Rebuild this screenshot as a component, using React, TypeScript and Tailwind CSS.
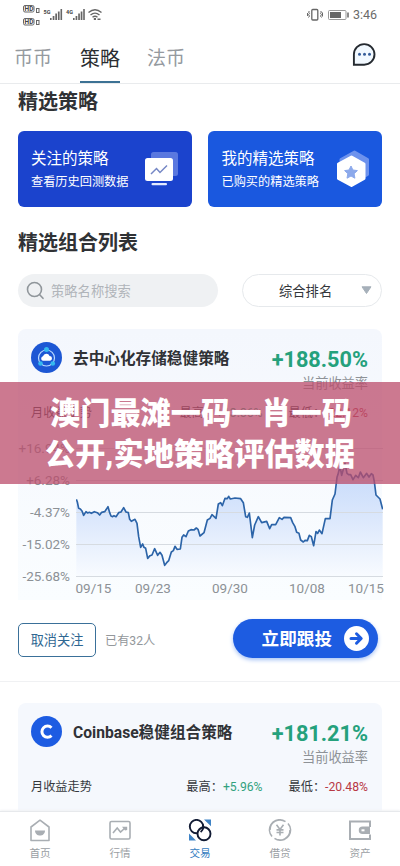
import React from "react";

const LINE =
  "229,58 232,66 236,85 241,87 246,93 251,106 258,95 263,99 268,97 274,100 283,95 292,98 299,105 305,97 314,95 319,88 324,80 329,98 333,108 338,110 342,107 348,110 356,98 363,96 371,83 378,96 385,98 389,118 394,124 405,118 411,130 416,170 422,202 428,192 432,202 437,205 443,235 450,227 456,225 464,206 473,226 480,217 486,226 494,256 500,248 506,242 514,216 520,212 525,199 531,208 541,207 546,172 551,165 558,170 565,153 573,149 582,150 589,144 594,148 600,168 612,158 622,120 630,115 636,104 648,115 655,72 662,68 667,77 675,55 682,56 686,49 691,57 705,54 722,56 730,68 737,110 742,112 748,99 757,173 764,135 775,110 785,128 800,124 809,146 815,134 827,134 838,113 846,118 852,112 872,113 878,128 885,140 890,157 897,160 902,180 910,186 915,181 922,182 928,166 934,170 941,197 948,155 953,160 958,150 966,161 976,116 990,116 997,60 1005,42 1011,-8 1014,-17 1020,-42 1025,-14 1035,-50 1041,-20 1046,-16 1052,-16 1059,-1 1067,-14 1075,-7 1081,-24 1090,-7 1100,-20 1107,-9 1114,-19 1119,-15 1123,5 1128,45 1140,57 1148,88";

function StatusBar() {
  return (
    <div className="flex h-[30px] items-center justify-between pl-[22px] pr-[23px]">
      <svg width="82" height="24" viewBox="22 3 82 24" fill="none">
        <g stroke="#666" strokeWidth="1">
          <rect x="23.5" y="5.5" width="10.5" height="6.5" rx="1.5" />
          <rect x="23.5" y="18.5" width="10.5" height="6.5" rx="1.5" />
          <rect x="36.5" y="8.5" width="2.5" height="4" />
          <rect x="36.5" y="20.5" width="2.5" height="4" />
        </g>
        <g fill="#444" fontFamily="Roboto, sans-serif" fontWeight="700">
          <text x="24.600" y="11.200" fontSize="6.500">HD</text>
          <text x="24.600" y="24.200" fontSize="6.500">HD</text>
          <text x="43.5" y="14" fontSize="5.5">5G</text>
          <text x="66" y="14" fontSize="5.5">4G</text>
        </g>
        <g fill="#666">
          <path d="M50 18h1.6v2H50zM52.7 16h1.7v4h-1.7zM55.3 13.500h1.700v6.500h-1.700zM57.900 11.500h1.700v8.500h-1.700zM60.500 9h1.600v11h-1.600z" />
          <path d="M73 18h1.600v2H73zM75.600 16h1.700v4h-1.700zM78.200 13.500h1.700v6.500h-1.700zM80.700 11.500h1.700v8.500h-1.700zM83.200 9h1.600v11h-1.600z" />
          <path d="M93.800 18h2.200v2h-2.200zM97.500 18.500h3v1.500h-3z" />
        </g>
        <path d="M88.500 12.500Q95 7 101.500 12.500M90.500 15Q95 11.300 99.500 15M92.500 17.300Q95 15.300 97.500 17.300" stroke="#666" strokeWidth="1.400" />
      </svg>
      <div className="flex items-center gap-[4px]">
        <svg width="42" height="14" viewBox="0 0 42 14" fill="none" stroke="#666">
          <rect x="4.800" y="1.500" width="6" height="10.500" rx="1" strokeWidth="1.300" />
          <path d="M2.500 3l-1 1 1 1.300-1 1.400 1 1.300-1 1.500M.5 5v3M13.500 3l1 1-1 1.300 1 1.400-1 1.300 1 1.500M15.500 4.500v4" strokeWidth="1" />
          <rect x="21.500" y="2.500" width="17.500" height="9" rx="1" stroke="#999" />
          <path d="M23 4h11v6H23z" fill="#666" stroke="none" />
          <path d="M41 4.500v5" strokeWidth="1.500" />
        </svg>
        <span className="pt-[1px] text-[12.500px] leading-none text-[#6a6a6a]">3:46</span>
      </div>
    </div>
  );
}

function Header() {
  return (
    <header className="flex h-[54px] items-start border-b border-[#e9ebed] pl-[14px]">
      <div className="h-[53px] w-[66px] pt-[14px] text-[19px] leading-[30px] text-[#959a9f]">币币</div>
      <div className="flex h-[53px] w-[67px] flex-col justify-between pt-[14px] text-[20px] leading-[30px] text-[#2b2e31]">
        <span>策略</span>
        <span className="h-[2px] w-[40px] bg-[#3c7294]" />
      </div>
      <div className="h-[53px] w-[205px] pt-[14px] text-[19px] leading-[30px] text-[#959a9f]">法币</div>
      <svg className="mt-[12px]" width="26" height="26" viewBox="352 42 26 26">
        <path d="M353.900 64.700V54.500A10.300 10.300 0 1 1 364.200 64.700Z" fill="#f2f9ff" stroke="#252a30" strokeWidth="1.900" />
        <g fill="#355d9a">
          <circle cx="359.500" cy="54.300" r="1.500" />
          <circle cx="364.500" cy="54.300" r="1.500" />
          <circle cx="369.500" cy="54.300" r="1.500" />
        </g>
      </svg>
    </header>
  );
}

function Promos() {
  return (
    <div className="mt-[14px] grid grid-cols-2 gap-[16px]">
      <div className="flex h-[76px] items-start rounded-[6px] bg-[#1b43cd] pl-[13px] text-white">
        <div className="w-[112px] whitespace-nowrap pt-[16px]">
          <p className="text-[15.500px] leading-[24px]">关注的策略</p>
          <p className="mt-[1px] text-[12.200px] leading-[20px]">查看历史回测数据</p>
        </div>
        <svg className="mt-[19px]" width="38" height="38" viewBox="143 150 38 38">
          <rect x="151" y="152" width="27" height="24" rx="2.500" fill="#5a78df" />
          <rect x="145" y="158" width="28" height="23" rx="2.500" fill="#fff" />
          <path d="M151 174L156.500 168.500 160 172.500 167 165.500" fill="none" stroke="#7587c5" strokeWidth="1.500" />
          <rect x="151.500" y="183" width="15.500" height="2.200" rx="1" fill="#e3eaff" />
        </svg>
      </div>
      <div className="flex h-[76px] items-start rounded-[6px] bg-[#1a58df] pl-[13.500px] text-white">
        <div className="w-[112.500px] whitespace-nowrap pt-[16px]">
          <p className="text-[15.500px] leading-[24px]">我的精选策略</p>
          <p className="mt-[1px] text-[12.200px] leading-[20px]">已购买的精选策略</p>
        </div>
        <svg className="mt-[17px]" width="38" height="42" viewBox="334 148 38 42">
          <path d="M354.500 152L367.500 159.500V174.500L354.500 182 341 174.500V159.500Z" fill="#6d92ed" stroke="#6d92ed" strokeWidth="3" strokeLinejoin="round" />
          <path d="M351.500 157L364 164V178.500L351.500 185.500 338.500 178.500V164Z" fill="#fff" stroke="#fff" strokeWidth="3" strokeLinejoin="round" />
          <path d="M351 166l1.900 4 4.500.6-3.300 3.100.8 4.500-3.900-2.200-4 2.200.8-4.500-3.200-3.100 4.400-.6z" fill="#8ca9eb" stroke="#8ca9eb" strokeLinejoin="round" />
        </svg>
      </div>
    </div>
  );
}

function Filters() {
  return (
    <div className="mt-[16px] flex h-[33px] justify-between">
      <div className="flex w-[200px] items-center gap-[6px] rounded-full bg-[#eff1f3] pl-[8px]">
        <svg width="19" height="19" viewBox="0 0 19 19" fill="none" stroke="#90969b" strokeWidth="1.600" strokeLinecap="round">
          <circle cx="8.500" cy="8.500" r="7" />
          <path d="M13.700 13.700L17 17.300" />
        </svg>
        <span className="pt-[2px] text-[13.300px] text-[#b0b4b9]">策略名称搜索</span>
      </div>
      <div className="flex w-[140px] items-center justify-between rounded-full border border-[#e6e9ec] pl-[36px] pr-[9px]">
        <span className="pt-[2px] text-[13.300px] text-[#33363a]">综合排名</span>
        <svg width="11" height="9" viewBox="0 0 11 9">
          <path d="M1 .8H10L5.500 7.500Z" fill="#a6b0ba" stroke="#a6b0ba" strokeLinejoin="round" />
        </svg>
      </div>
    </div>
  );
}

function StorageLogo() {
  return (
    <svg width="31" height="31" viewBox="0 0 31 31">
      <circle cx="15.500" cy="15.500" r="15.500" fill="#1d57d4" />
      <circle cx="15.500" cy="16" r="8" fill="none" stroke="#b9d9ff" strokeWidth="1.200" />
      <g fill="#35b9ef">
        <circle cx="15.500" cy="7.500" r="2.500" />
        <circle cx="9.500" cy="21.500" r="2.300" />
        <circle cx="21.800" cy="21.500" r="2.300" />
      </g>
      <path d="M11.800 18.800a2.400 2.400 0 0 1 .2-4.600 3.500 3.500 0 0 1 6.600-.3 2.500 2.500 0 0 1 .6 4.900z" fill="#fff" />
    </svg>
  );
}

function CoinLogo() {
  return (
    <svg width="31" height="31" viewBox="0 0 31 31">
      <circle cx="15.500" cy="15.500" r="15.500" fill="#1d5ce2" />
      <path d="M20.500 11.700A5.600 5.600 0 1 0 20.500 19.600" fill="none" stroke="#fff" strokeWidth="3" />
    </svg>
  );
}

type StrategyProps = { logo: React.ReactNode; name: string; rate: string; high: string; low: string };

function StrategyHead({ logo, name, rate, high, low }: StrategyProps) {
  return (
    <div className="h-[97px] pl-[13px] pr-[14px] pt-[13px]">
      <div className="flex h-[61px] items-start justify-between">
        <div className="flex items-center gap-[11px]">
          {logo}
          <span className="whitespace-nowrap pt-[3px] text-[15.650px] font-bold leading-[28px] text-[#303236]">{name}</span>
        </div>
        <div className="flex flex-col items-end pt-[4px]">
          <span className="text-[21.700px] font-bold leading-[28px] text-[#25a17c]">{rate}</span>
          <span className="text-[13.200px] leading-[20px] text-[#8e9297]">当前收益率</span>
        </div>
      </div>
      <div className="flex h-[20px] items-center whitespace-nowrap text-[12.200px] leading-[20px] text-[#36393d]">
        <span>月收益走势</span>
        <span className="ml-auto">最高：<span className="text-[#32a17d]">{high}</span></span>
        <span className="ml-[26px]">最低：<span className="text-[#b83945]">{low}</span></span>
      </div>
    </div>
  );
}

function Chart() {
  return (
    <div className="h-[174px]">
      <div className="flex h-[153px] justify-between">
        <div className="flex w-[52px] flex-col items-end pt-[6px] text-[13.500px] leading-[32px] text-[#8c9196]">
          <span>+16.94%</span>
          <span>+6.28%</span>
          <span>-4.37%</span>
          <span>-15.02%</span>
          <span>-25.68%</span>
        </div>
        <svg className="-mr-[1px]" width="307" height="153" viewBox="228 -162 921 459">
          <defs>
            <linearGradient id="area" x1="0" y1="-50" x2="0" y2="289" gradientUnits="userSpaceOnUse">
              <stop offset="0" stopColor="#c4d9fb" />
              <stop offset="0.500" stopColor="#dce8fc" />
              <stop offset="1" stopColor="#f8fbff" />
            </linearGradient>
          </defs>
          <polygon points={`229,289 ${LINE} 1148,289`} fill="url(#area)" />
          <path d="M228-94.500H1149M228 1.500H1149M228 97.500H1149M228 193.500H1149M228 289.500H1149" stroke="#d6dbe1" strokeWidth="3" />
          <polyline points={LINE} fill="none" stroke="#2c64a8" strokeWidth="5" strokeLinejoin="round" />
        </svg>
      </div>
      <div className="-mr-[2px] -mt-[1px] flex h-[20px] pl-[57.500px] text-[13.500px] leading-[20px] text-[#8c9196]">
        <span className="w-[59.500px]">09/15</span>
        <span className="w-[77px]">09/23</span>
        <span className="w-[77px]">09/30</span>
        <span className="w-[59px]">10/08</span>
        <span>10/15</span>
      </div>
    </div>
  );
}

function Actions() {
  return (
    <div className="flex h-[81px] items-start pt-[19px]">
      <button className="mt-[4px] h-[34px] w-[78px] rounded-[5px] border border-[#3a7099] pt-[2px] text-[13.200px] leading-none text-[#2f6792]">取消关注</button>
      <span className="ml-[9px] mt-[12px] text-[12.200px] leading-[20px] text-[#93979b]">已有32人</span>
      <button className="ml-auto mr-[4px] flex h-[39px] w-[145px] items-center justify-end gap-[12px] rounded-full bg-[#1d5ce1] pr-[9px] text-[17.600px] font-bold text-white shadow-[0_2px_4px_#a9c4f5]">
        <span className="pt-[2px]">立即跟投</span>
        <svg width="25" height="25" viewBox="0 0 25 25">
          <circle cx="12.500" cy="12.500" r="12.500" fill="#fff" />
          <path d="M7 12.500H16M12.500 7.800L17.200 12.500 12.500 17.200" fill="none" stroke="#1d5ce1" strokeWidth="3" strokeLinecap="round" strokeLinejoin="round" />
        </svg>
      </button>
    </div>
  );
}

function NavItem({ label, active, children }: { label: string; active?: boolean; children: React.ReactNode }) {
  return (
    <div className="flex w-[80px] flex-col items-center pt-[7px]">
      <svg width="24" height="24" viewBox="0 0 24 24" fill="none" stroke="#a9aeb3" strokeWidth="1.600">{children}</svg>
      <span className={active ? "mt-[3px] text-[10.600px] leading-[16px] text-[#347cbf]" : "mt-[3px] text-[10.600px] leading-[16px] text-[#9a9ea3]"}>{label}</span>
    </div>
  );
}

function BottomNav() {
  return (
    <nav className="flex h-[55px] shrink-0 border-t border-[#e7e9ec] bg-white shadow-[0_-1px_2px_#f1f2f4]">
      <NavItem label="首页">
        <path d="M3 8L12 1.200 21 8V21.500H3Z" strokeLinejoin="round" />
        <path d="M7 11.500H17C17 18.300 7 18.300 7 11.500Z" fill="#a9aeb3" stroke="none" />
      </NavItem>
      <NavItem label="行情">
        <rect x="2" y="2.500" width="20" height="17.500" rx="1.500" />
        <path d="M5 14L9.200 9 12.500 13 17 9" />
        <path d="M14 7.700H19.200V11L17 11.500Z" fill="#a9aeb3" stroke="none" />
      </NavItem>
      <NavItem label="交易" active>
        <path d="M1 14.500V21.500H8ZM16 .5H23V7.300Z" fill="#3f83c5" stroke="none" />
        <circle cx="8.500" cy="7.600" r="6.700" fill="#fff" stroke="#111b34" strokeWidth="1.900" />
        <circle cx="16" cy="14.800" r="6.500" fill="#fff" stroke="#111b34" strokeWidth="1.900" />
        <path d="M12.600 12.900A6.700 6.700 0 0 0 14.900 5.600" stroke="#111b34" strokeWidth="1.900" />
      </NavItem>
      <NavItem label="借贷">
        <path d="M4 17.500A10 10 0 0 1 14 1.200M20 4.500A10 10 0 0 1 10 20.800M2 11A10 10 0 0 1 17.500 2.600M22 11A10 10 0 0 1 6.500 19.400" />
        <path d="M8.500 5.800L12 10.500 15.500 5.800M12 10.500V16.500M8.500 10.900H15.500M8.500 13.500H15.500" />
      </NavItem>
      <NavItem label="资产">
        <path d="M22 8V2.500H2V20H22V15.500" strokeWidth="2" />
        <path d="M22 7.600H14.500A3.600 3.600 0 0 0 14.500 15.100H22Z" fill="#a9aeb3" stroke="none" />
        <rect x="13.500" y="10.300" width="3" height="2" fill="#fff" stroke="none" />
      </NavItem>
    </nav>
  );
}

export default function App() {
  return (
    <div className="relative flex h-[866px] w-[400px] flex-col overflow-hidden bg-white font-[Roboto,'Noto_Sans_CJK_SC',sans-serif]">
      <StatusBar />
      <Header />
      <main className="h-[727px] overflow-hidden px-[18px]">
        <h2 className="mt-[3px] text-[20px] font-bold leading-[30px] text-[#303235]">精选策略</h2>
        <Promos />
        <h2 className="mt-[21px] text-[20px] font-bold leading-[30px] text-[#303235]">精选组合列表</h2>
        <Filters />
        <section className="mt-[22px] h-[271px] rounded-t-[8px] bg-linear-to-b from-[#f4f7fd] to-[#fafdff]">
          <StrategyHead logo={<StorageLogo />} name="去中心化存储稳健策略" rate="+188.50%" high="+13.36%" low="-22.12%" />
          <Chart />
        </section>
        <Actions />
        <div className="-mx-[18px] h-px bg-[#f0f1f3]" />
        <section className="mt-[21px] h-[110px] rounded-t-[8px] bg-[#f5f8fd]">
          <StrategyHead logo={<CoinLogo />} name="Coinbase稳健组合策略" rate="+181.21%" high="+5.96%" low="-20.48%" />
        </section>
      </main>
      <BottomNav />
      <div className="absolute inset-x-0 top-[382px] h-[102px] bg-[#bb4c6b]/75 pt-[11px] text-center text-[30.200px] font-black leading-[41px] text-white">
        <p className="pl-[2px]">澳门最滩一码一肖一码</p>
        <p>公开,实地策略评估数据</p>
      </div>
    </div>
  );
}
